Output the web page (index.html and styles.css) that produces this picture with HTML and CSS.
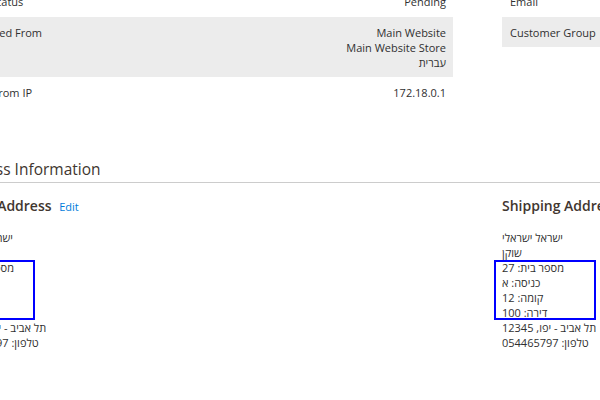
FILE: index.html
```html
<!DOCTYPE html>
<html lang="en">
<head>
<meta charset="utf-8">
<title>Order View</title>
<link rel="stylesheet" href="styles.css">
</head>
<body>
<div class="page">
  <div class="info-row">
    <section class="col">
      <div class="tbl tbl-order">
        <div class="tr"><div class="th">Order Status</div><div class="td">Pending</div></div>
        <div class="tr odd"><div class="th">Purchased From</div><div class="td">Main Website<br>Main Website Store<br><span dir="rtl">עברית</span></div></div>
        <div class="tr"><div class="th">Placed from IP</div><div class="td">172.18.0.1</div></div>
      </div>
    </section>
    <section class="col">
      <div class="tbl tbl-account">
        <div class="tr"><div class="th">Email</div><div class="td">israel@example.com</div></div>
        <div class="tr odd"><div class="th">Customer Group</div><div class="td">General</div></div>
      </div>
    </section>
  </div>

  <section class="section">
    <h2 class="section-title">Address Information</h2>
    <div class="cols">
      <div class="col">
        <h3 class="item-title">Billing Address <a href="#" class="edit">Edit</a></h3>
        <address class="addr">
          <div>ישראל ישראלי</div>
          <div>שוקן</div>
          <div class="mark mark-billing">
            <div>מספר בית: 27</div>
            <div>כניסה: א</div>
            <div>קומה: 12</div>
            <div>דירה: 100</div>
          </div>
          <div>תל אביב - יפו, 12345</div>
          <div>טלפון: 054465797</div>
        </address>
      </div>
      <div class="col">
        <h3 class="item-title">Shipping Address <a href="#" class="edit">Edit</a></h3>
        <address class="addr">
          <div>ישראל ישראלי</div>
          <div>שוקן</div>
          <div class="mark">
            <div>מספר בית: 27</div>
            <div>כניסה: א</div>
            <div>קומה: 12</div>
            <div>דירה: 100</div>
          </div>
          <div>תל אביב - יפו, 12345</div>
          <div>טלפון: 054465797</div>
        </address>
      </div>
    </div>
  </section>
</div>
</body>
</html>
```

FILE: styles.css
```css
* {
  box-sizing: border-box;
  margin: 0;
  padding: 0;
}

html,
body {
  overflow: hidden;
}

body {
  width: 600px;
  height: 400px;
  background: #ffffff;
  color: #303030;
  font-family: "Open Sans", "Liberation Sans", Arial, sans-serif;
  font-size: 11px;
  line-height: 15px;
}

.page {
  width: 1100px;
  margin: -14px 0 0 -48px;
}

.info-row,
.cols {
  display: flex;
  gap: 49px;
}

.col {
  flex: none;
  width: 501px;
}

.tr {
  display: flex;
  justify-content: space-between;
  padding: 8px 7px 7.5px 8px;
}

.tbl-order .tr {
  padding-left: 6px;
}

.tr.odd {
  background: #ececec;
}

.td {
  text-align: right;
}

.section {
  margin-top: 51.5px;
}

.section-title {
  font-size: 15.5px;
  line-height: 20px;
  font-weight: 400;
  color: #41362f;
  padding-bottom: 3px;
  border-bottom: 1px solid #cccccc;
}

.cols {
  margin-top: 14.3px;
}

.item-title {
  font-size: 14px;
  line-height: 18px;
  font-weight: 600;
  color: #41362f;
  margin-bottom: 14px;
}

.edit {
  margin-left: 4px;
  font-size: 11px;
  font-weight: 400;
  color: #007bdb;
  text-decoration: none;
}

.addr {
  font-style: normal;
  direction: rtl;
  text-align: left;
}

.mark {
  width: 102px;
  margin-left: -8px;
  margin-right: auto;
  padding-left: 8px;
  outline: 2px solid #0000ff;
  outline-offset: -2px;
}

.mark-billing {
  width: 91px;
}
```
